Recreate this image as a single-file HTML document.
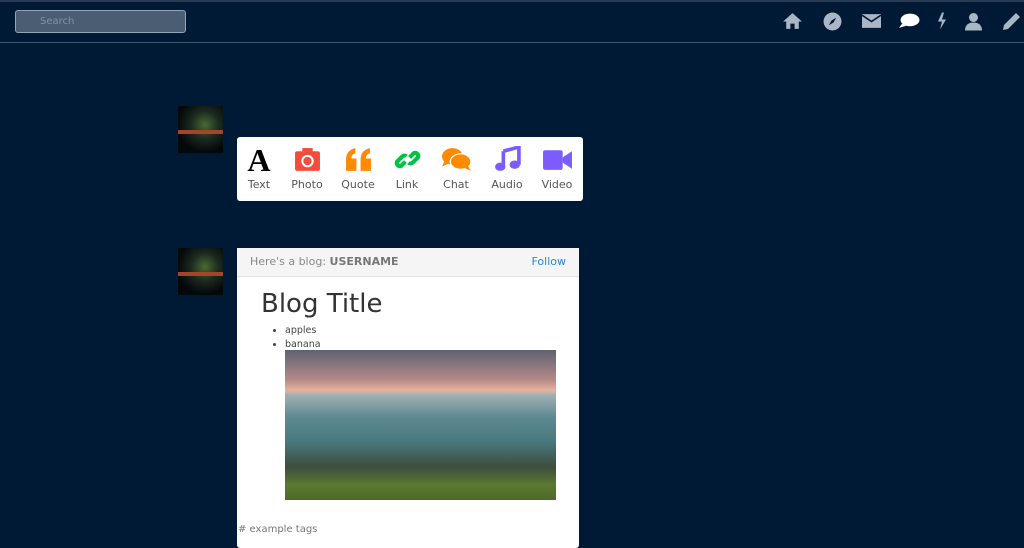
<!DOCTYPE html>
<html><head><meta charset="utf-8"><style>
*{margin:0;padding:0;box-sizing:border-box}
body{width:1024px;height:539px;background:#001935;font-family:"DejaVu Sans","Liberation Sans",sans-serif;position:relative;overflow:hidden}
.top{position:absolute;left:0;top:0;width:1024px;height:43px;border-top:2px solid #2b3a55;border-bottom:1px solid #3d5670}
.search{position:absolute;left:15px;top:8px;width:171px;height:23px;background:#4a5d73;border:1px solid #90a4ba;border-radius:3px;color:#7f92a6;font-size:10px;padding:5px 0 0 24px}
.ic{position:absolute;top:10px}
.av{position:absolute;left:178px;width:45px;height:47px;background:radial-gradient(circle at 60% 40%,#4a6a30 0,#1c2a20 35%,#05080a 70%);overflow:hidden}
.av:after{content:"";position:absolute;left:0;top:24px;width:45px;height:4px;background:#a3452a}
.comp{position:absolute;left:237px;top:137px;width:346px;height:64px;background:#fff;border-radius:3px}
.it{position:absolute;top:9px;width:50px;text-align:center;font-size:11px;color:#555}
.it svg{display:block;margin:0 auto 5px}
.post{position:absolute;left:237px;top:248px;width:342px;height:300px;background:#fff;border-radius:3px}
.hd{height:29px;background:#f5f5f5;border-bottom:1px solid #e4e4e4;font-size:11px;color:#888;padding:7px 0 0 13px;position:relative}
.hd b{color:#777}
.hd span{position:absolute;right:13px;top:7px;color:#2a86d8}
h1{position:absolute;left:24px;top:41px;font-weight:normal;font-size:26px;color:#333}
ul{position:absolute;left:48px;top:76px;font-size:9.5px;color:#444;line-height:14px}
.img{position:absolute;left:48px;top:102px;width:271px;height:150px;background:linear-gradient(180deg,#5e6270 0,#b58a88 20%,#e7b39a 27%,#9fb0b5 30%,#5c8a90 45%,#4a7a80 60%,#3d4e3e 78%,#5b7a30 90%,#4d6a28 100%)}
.tags{position:absolute;left:1px;top:276px;font-size:10px;color:#777}
</style></head><body>
<div class="top">
<div class="search">Search</div>
<svg class="ic" style="left:782px" width="21" height="18" viewBox="0 0 20 17"><path d="M10 1L1 9h3v7h4v-5h4v5h4V9h3z" fill="#aab6c4"/></svg>
<svg class="ic" style="left:823px" width="19" height="19" viewBox="0 0 18 18"><circle cx="9" cy="9" r="8.5" fill="#aab6c4"/><path d="M12.5 5.5L10 10 5.5 12.5 8 8z" fill="#001935"/></svg>
<svg class="ic" style="left:862px;top:12px" width="19" height="14" viewBox="0 0 18 13"><rect width="18" height="13" fill="#aab6c4"/><path d="M0 1l9 6 9-6" stroke="#001935" stroke-width="1.5" fill="none"/></svg>
<svg class="ic" style="left:899px;top:11px" width="21" height="16" viewBox="0 0 20 15"><ellipse cx="10.5" cy="6.5" rx="9" ry="6" fill="#fff"/><path d="M3 10L0 14l7-2z" fill="#fff"/></svg>
<svg class="ic" style="left:937px" width="10" height="18" viewBox="0 0 10 17"><path d="M5 0L1 9h4l-2 8 6-10H5l2-7z" fill="#aab6c4"/></svg>
<svg class="ic" style="left:965px" width="17" height="19" viewBox="0 0 17 18"><circle cx="8.5" cy="5" r="4.5" fill="#aab6c4"/><path d="M0 18c0-6 4-8 8.5-8s8.5 2 8.5 8z" fill="#aab6c4"/></svg>
<svg class="ic" style="left:1002px" width="19" height="19" viewBox="0 0 19 19"><path d="M14 1l4 4L6 17l-5 1 1-5z" fill="#aab6c4"/></svg>
</div>
<div class="av" style="top:106px"></div>
<div class="av" style="top:248px"></div>
<div class="comp">
<div class="it" style="left:-3px"><svg width="26" height="27" viewBox="0 0 24 26"><text x="12" y="24" text-anchor="middle" font-family="Liberation Serif" font-weight="bold" font-size="31" fill="#000">A</text></svg>Text</div>
<div class="it" style="left:45px"><svg width="27" height="27" viewBox="0 0 26 26"><rect x="1" y="5" width="24" height="19" rx="2" fill="#f44b3c"/><rect x="8" y="2" width="10" height="5" fill="#f44b3c"/><circle cx="13" cy="14.5" r="5" fill="none" stroke="#fff" stroke-width="2"/></svg>Photo</div>
<div class="it" style="left:96px"><svg width="27" height="27" viewBox="0 0 26 26"><path d="M1 13Q1 4 10 2v5Q6 8 6 12h5v12H1zM15 13q0-9 9-11v5q-4 1-4 5h5v12H15z" fill="#ff8a00"/></svg>Quote</div>
<div class="it" style="left:145px"><svg width="27" height="27" viewBox="0 0 26 26"><g fill="none" stroke="#00c244" stroke-width="4"><path d="M11 15l-4 4a3 3 0 0 1-4-4l5-5a3 3 0 0 1 4 0"/><path d="M15 11l4-4a3 3 0 0 1 4 4l-5 5a3 3 0 0 1-4 0"/></g></svg>Link</div>
<div class="it" style="left:194px"><svg width="31" height="27" viewBox="0 0 30 26"><ellipse cx="11" cy="10" rx="10" ry="8" fill="#ff8a00"/><ellipse cx="19" cy="15" rx="10" ry="7.5" fill="#ff8a00" stroke="#fff" stroke-width="1.2"/><path d="M3 15l-2 5 6-3z M26 19l3 5-7-3z" fill="#ff8a00"/></svg>Chat</div>
<div class="it" style="left:245px"><svg width="27" height="27" viewBox="0 0 26 26"><path d="M9 5l15-4v17" stroke="#7c5cff" stroke-width="3.5" fill="none"/><path d="M9 5v15" stroke="#7c5cff" stroke-width="3.5"/><ellipse cx="6" cy="20" rx="5" ry="4" fill="#7c5cff"/><ellipse cx="20" cy="18" rx="5" ry="4" fill="#7c5cff"/></svg>Audio</div>
<div class="it" style="left:295px"><svg width="31" height="27" viewBox="0 0 30 26"><rect x="1" y="4" width="19" height="19" rx="2" fill="#7c5cff"/><path d="M20 11l9-6v17l-9-6z" fill="#7c5cff"/></svg>Video</div>
</div>
<div class="post">
<div class="hd">Here's a blog: <b>USERNAME</b><span>Follow</span></div>
<h1>Blog Title</h1>
<ul><li>apples</li><li>banana</li></ul>
<div class="img"></div>
<div class="tags"># example tags</div>
</div>
</body></html>
